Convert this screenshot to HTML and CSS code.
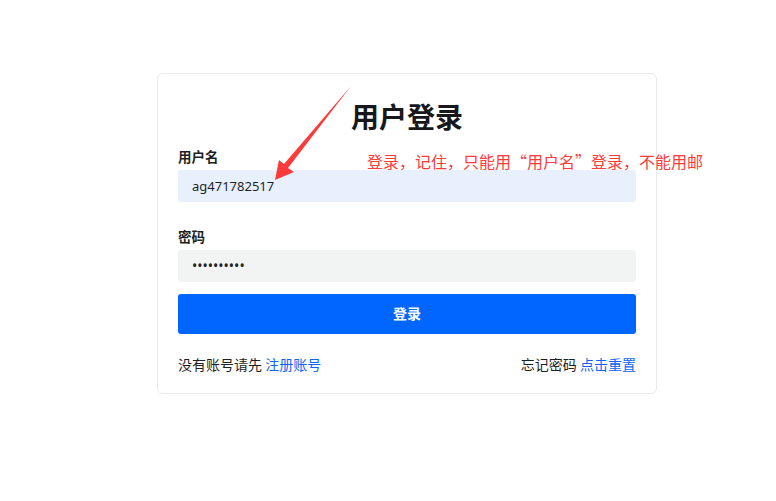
FILE: index.html
```html
<!DOCTYPE html>
<html lang="zh-CN">
<head>
<meta charset="utf-8">
<title>用户登录</title>
<link rel="stylesheet" href="styles.css">
</head>
<body>
<div class="page">
  <div class="card">
    <h1 class="title">用户登录</h1>
    <form class="form">
      <label class="label">用户名</label>
      <div class="input input-filled">ag471782517</div>
      <label class="label label-gap">密码</label>
      <div class="input input-pass">••••••••••</div>
      <button type="button" class="btn">登录</button>
    </form>
    <div class="footer">
      <span>没有账号请先 <a class="link">注册账号</a></span>
      <span>忘记密码 <a class="link">点击重置</a></span>
    </div>
  </div>
</div>
<div class="note">登录，记住，只能用“用户名”登录，不能用邮</div>
<svg class="arrow" width="776" height="501" viewBox="0 0 776 501">
  <polygon points="351,86 288,168 294,172 275,180 279,160 284,164" fill="#fd3a3a"/>
</svg>
</body>
</html>
```
FILE: styles.css
```css
html, body {
  margin: 0;
  padding: 0;
  background: #ffffff;
}
body {
  font-family: "Noto Sans CJK SC", "Noto Sans", "Liberation Sans", sans-serif;
  color: #1f2329;
  width: 776px;
  height: 501px;
  overflow: hidden;
  position: relative;
}
.page {
  padding: 73px 0 0 157px;
}
.card {
  box-sizing: border-box;
  width: 500px;
  border: 1px solid #e8e9eb;
  border-radius: 6px;
  padding: 22px 20px 19px;
  background: #fff;
}
.title {
  margin: 0 0 10px;
  font-size: 28px;
  line-height: 40px;
  font-weight: 700;
  text-align: center;
  color: #16181c;
}
.form {
  display: flex;
  flex-direction: column;
}
.label {
  font-size: 13.5px;
  line-height: 20px;
  font-weight: 700;
  color: #1d1f23;
  margin-bottom: 4px;
}
.label-gap {
  margin-top: 24px;
}
.input {
  height: 32px;
  border-radius: 3px;
  box-sizing: border-box;
  padding: 0 14px;
  font-size: 13px;
  line-height: 32px;
  color: #1d1f23;
  font-family: "Noto Sans", "Liberation Sans", sans-serif;
}
.input-filled {
  background: #e8f0fe;
}
.input-pass {
  background: #f2f4f3;
  font-size: 14px;
  letter-spacing: 0;
  color: #222;
}
.btn {
  margin-top: 12px;
  height: 40px;
  padding: 0 0 3px;
  border: none;
  border-radius: 3px;
  background: #0066ff;
  color: #fff;
  font-family: inherit;
  font-size: 14px;
  font-weight: 700;
}
.footer {
  margin-top: 20px;
  display: flex;
  justify-content: space-between;
  font-size: 14px;
  line-height: 20px;
  color: #1d1f23;
}
.link {
  color: #0a66f5;
  text-decoration: none;
}
.note {
  position: absolute;
  left: 367px;
  top: 149px;
  font-size: 16px;
  line-height: 24px;
  color: #fd3a3a;
  white-space: nowrap;
}
.arrow {
  position: absolute;
  left: 0;
  top: 0;
  pointer-events: none;
}
```
